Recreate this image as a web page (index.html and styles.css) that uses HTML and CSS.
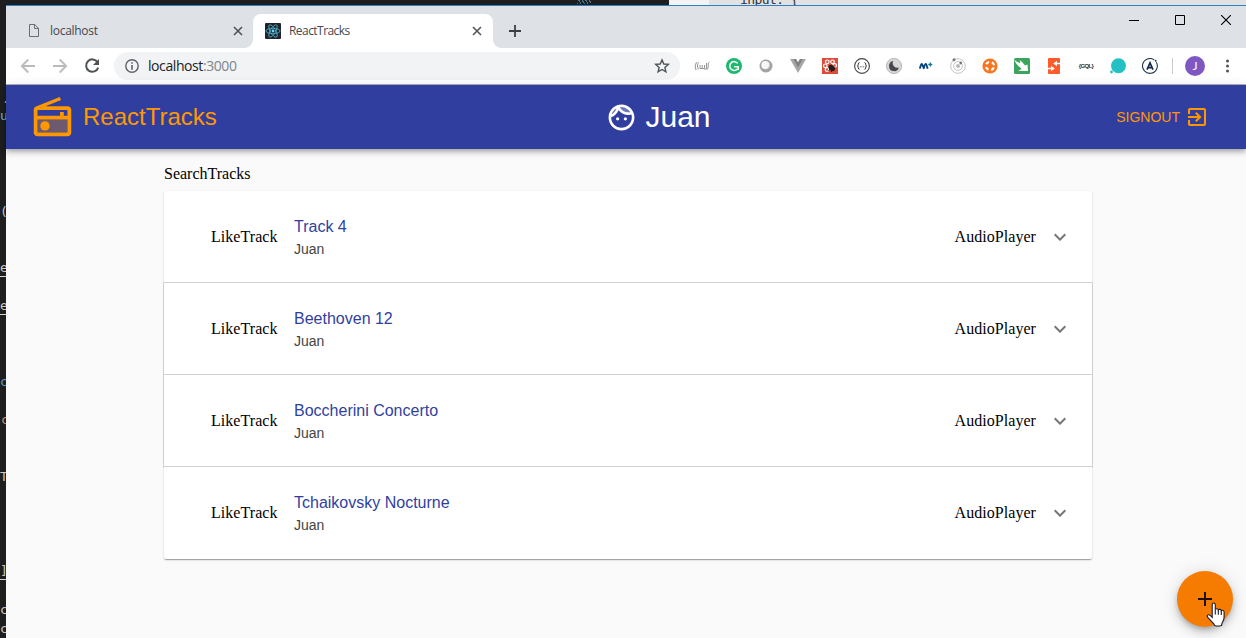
FILE: index.html
```
<!DOCTYPE html>
<html lang="en">
<head>
<meta charset="utf-8">
<title>ReactTracks</title>
<link rel="stylesheet" href="styles.css">
</head>
<body>
<div class="desktop">
  <div class="editor-tab"></div>
  <div class="editor-top"><span>input: {</span></div>
  <div class="gutter">
    <span style="top:90px;left:2px;color:#d4d4d4">.</span>
    <span style="top:107px;color:#6fb3e0">u</span>
    <span style="top:203px;left:0;color:#a9cbe8">(</span>
    <span class="under" style="top:259px">e</span>
    <span class="under" style="top:297px">e</span>
    <span style="top:373px;color:#569cd6">c</span>
    <span style="top:411px;left:1px;color:#ce9178">c</span>
    <span style="top:468px">T</span>
    <span class="under" style="top:562px">]</span>
    <span style="top:601px">c</span>
    <span style="top:620px">c</span>
  </div>

  <main class="window">
    <div class="tabstrip">
      <div class="tab">
        <svg class="doc" width="12" height="16" viewBox="0 0 12 16"><path d="M1.5 1.500h5.300l3.700 3.800v8.200h-9zM6.500 1.500v4h4" fill="none" stroke="#6b6e72"/></svg>
        <span class="tab-title">localhost</span>
        <svg class="close" width="10" height="10" viewBox="0 0 10 10"><path d="M1 1l8 8M9 1L1 9" stroke="#505356" stroke-width="1.6"/></svg>
      </div>
      <div class="tab active">
        <svg class="favicon" width="16" height="16" viewBox="0 0 16 16"><rect width="16" height="16" rx="1" fill="#20232a"/><g fill="none" stroke="#4fb5d0" stroke-width=".8"><ellipse cx="8" cy="8" rx="7" ry="2.7"/><ellipse cx="8" cy="8" rx="7" ry="2.7" transform="rotate(60 8 8)"/><ellipse cx="8" cy="8" rx="7" ry="2.7" transform="rotate(120 8 8)"/></g><circle cx="8" cy="8" r="1.4" fill="#61dafb"/></svg>
        <span class="tab-title react">ReactTracks</span>
        <svg class="close" width="10" height="10" viewBox="0 0 10 10"><path d="M1 1l8 8M9 1L1 9" stroke="#505356" stroke-width="1.6"/></svg>
      </div>
      <svg class="newtab" width="12" height="12" viewBox="0 0 12 12"><path d="M6 0v12M0 6h12" stroke="#3c4043" stroke-width="1.8"/></svg>
      <div class="controls">
        <svg width="10" height="10" viewBox="0 0 10 10"><path d="M0 5.500h10" stroke="#000"/></svg>
        <svg width="10" height="10" viewBox="0 0 10 10"><path d="M.5 .5h9v9h-9z" fill="none" stroke="#000"/></svg>
        <svg width="10" height="10" viewBox="0 0 10 10"><path d="M0 0l10 10M10 0L0 10" stroke="#000" stroke-width="1.1"/></svg>
      </div>
    </div>

    <div class="toolbar">
      <div class="cell"><svg width="16" height="16" viewBox="0 0 16 16"><path d="M15 8H2M8.3 1.5L1.8 8l6.5 6.5" fill="none" stroke="#b9bbbd" stroke-width="1.8"/></svg></div>
      <div class="cell"><svg width="16" height="16" viewBox="0 0 16 16"><path d="M1 8h13M7.7 1.5L14.2 8l-6.5 6.5" fill="none" stroke="#b9bbbd" stroke-width="1.8"/></svg></div>
      <div class="cell"><svg width="16" height="16" viewBox="0 0 16 16"><path d="M13.6 4.3A6.2 6.2 0 1 0 14.2 9.6" fill="none" stroke="#505356" stroke-width="2"/><path d="M15 1v6H9z" fill="#505356"/></svg></div>
      <div class="omnibox">
        <svg width="14" height="14" viewBox="0 0 14 14"><circle cx="7" cy="7" r="6.2" fill="none" stroke="#5f6368" stroke-width="1.4"/><path d="M7 3.200v1.600M7 6v4.800" stroke="#5f6368" stroke-width="1.6"/></svg>
        <span class="url">localhost<i>:3000</i></span>
        <svg class="star" width="16" height="16" viewBox="0 0 16 16"><path d="M8 1.9l1.8 4.1 4.5.4-3.4 3 1 4.4L8 11.5l-3.9 2.3 1-4.4-3.4-3 4.5-.4z" fill="none" stroke="#505356" stroke-width="1.4"/></svg>
      </div>
      <div class="extensions">
        <div class="cell"><svg width="16" height="10" viewBox="0 0 16 10"><path d="M2.500 1Q0 5 2 9M4.300 1.500Q2.500 5 4.300 8.500M6 4v3.500h2.200V4M8.200 7.500h2.300V4M12.500 2v5.500l-2 1M15.500 1Q13.800 1.500 14.200 4.500T12.500 9" fill="none" stroke="#888" stroke-width=".9"/></svg></div>
        <div class="cell"><svg width="16" height="16" viewBox="0 0 16 16"><circle cx="8" cy="8" r="8" fill="#1eb871"/><path d="M11.7 5.4A4.4 4.4 0 1 0 11.4 11M8.2 8.7h4v3.3" fill="none" stroke="#fff" stroke-width="1.5"/></svg></div>
        <div class="cell"><svg width="14" height="14" viewBox="0 0 14 14"><circle cx="7" cy="7" r="6.5" fill="#a3a3a3"/><circle cx="6.4" cy="6.1" r="4.1" fill="#f6f6f6"/><path d="M8 10q2-1 2.5-3" stroke="#ccc" fill="none"/></svg></div>
        <div class="cell"><svg width="16" height="14" viewBox="0 0 16 14"><path d="M0 0h6l2 3.5L10 0h6L8 14z" fill="#a7a7a7"/><path d="M3.2 0H6l2 3.5L10 0h2.800L8 8.400z" fill="#828282"/></svg></div>
        <div class="cell"><svg width="16" height="16" viewBox="0 0 16 16"><path d="M0 0h16v16H0z" fill="#dd4b39"/><g fill="none" stroke="#fff" stroke-width="1.2"><circle cx="5.300" cy="3.800" r="1.800"/><circle cx="10.500" cy="3.800" r="1.800"/><circle cx="3.300" cy="7.800" r="1.800"/><circle cx="12.700" cy="7.500" r="1.800"/><circle cx="5" cy="11.500" r="1.800"/></g><ellipse cx="9.800" cy="10" rx="3.600" ry="2.700" transform="rotate(40 9.800 10)" fill="#241b1b"/><path d="M7 7l1.500 1.500M11 7.500L6.500 13M13 9.500L9 14" stroke="#241b1b"/></svg></div>
        <div class="cell"><svg width="16" height="16" viewBox="0 0 16 16"><circle cx="8" cy="8" r="7.4" fill="none" stroke="#444" stroke-width="1.1"/><path d="M5.500 4.700q-1.300 0-1.200 1.500Q4.400 8 3.400 8q1 0 .9 1.800-.1 1.500 1.200 1.500M10.500 4.700q1.300 0 1.200 1.500Q11.600 8 12.600 8q-1 0-.9 1.800.1 1.500-1.200 1.500" fill="none" stroke="#333"/><path d="M5.900 8.800h.9M7.500 8.800h.9M9.200 8.800h.9" stroke="#555"/></svg></div>
        <div class="cell"><svg width="16" height="16" viewBox="0 0 16 16"><circle cx="8" cy="8" r="7.600" fill="#d7d7d7" stroke="#aaa" stroke-width=".8"/><path d="M7.200 3a5.100 5.100 0 1 0 5.800 6.500A4.700 4.700 0 0 1 7.200 3z" fill="#47484b"/></svg></div>
        <div class="cell"><svg width="14" height="10" viewBox="0 0 14 10"><path d="M.8 7.600Q2 3 2.700 3T4.700 7.200Q6 3 6.800 3T8.600 7.800" fill="none" stroke="#08437c" stroke-width="1.900" stroke-linejoin="round"/><path d="M9.300 3.500h4M11.300 1.500v4" stroke="#08779d" stroke-width="1.300"/></svg></div>
        <div class="cell"><svg width="16" height="16" viewBox="0 0 16 16"><g fill="none" stroke="#c4c4c4"><circle cx="8" cy="8" r="7.300"/><circle cx="8" cy="8" r="4.400"/></g><circle cx="8" cy="8" r="2" fill="#b9b9b9"/><circle cx="4" cy="1.800" r="1.500" fill="#777"/><circle cx="10.800" cy="5" r="1.400" fill="#777"/></svg></div>
        <div class="cell"><svg width="16" height="16" viewBox="0 0 16 16"><circle cx="8" cy="8" r="7.600" fill="#f77620"/><circle cx="8" cy="8" r="4.100" fill="none" stroke="#fff" stroke-width="2.200" stroke-dasharray="3.600 2.840" stroke-dashoffset="-1.420"/><circle cx="8" cy="8" r="1.700" fill="#f77620"/></svg></div>
        <div class="cell"><svg width="16" height="16" viewBox="0 0 16 16"><rect width="16" height="16" rx="1.500" fill="#3ba55d"/><path d="M0 1.500Q4 5 6.500 5L5.500 2Q9 4 11 7.500L13.500 6.500 14 13 4 13Q6.500 12 7.500 10.500 3 8 0 1.500z" fill="#fff"/></svg></div>
        <div class="cell"><svg width="12" height="16" viewBox="0 0 12 16"><rect width="12" height="16" rx="1" fill="#fd5b29"/><path d="M0 10.500h4M12 5.500H8" fill="none" stroke="#fff" stroke-width="1.400"/><path d="M9 2.800L5.200 5.500 9 8.200zM3 7.800l3.800 2.700L3 13.200z" fill="#fff"/></svg></div>
        <div class="cell gql">{GQL}</div>
        <div class="cell"><svg width="16" height="16" viewBox="0 0 16 16"><circle cx="8.500" cy="7.700" r="7.500" fill="#22c1c3"/><circle cx="1.500" cy="14" r="1.400" fill="#22c1c3"/></svg></div>
        <div class="cell"><svg width="16" height="16" viewBox="0 0 16 16"><path d="M14.300 4.200A7.400 7.400 0 1 1 12.200 1.900" fill="none" stroke="#24394f" stroke-width="1.100"/><circle cx="13.600" cy="2.700" r="1" fill="#24394f"/><path d="M5 11.700L8 4.800l3 6.900M6.500 9.700h3" fill="none" stroke="#172c4b" stroke-width="1.700"/></svg></div>
      </div>
      <div class="divider"></div>
      <div class="avatar">J</div>
      <svg class="dots" width="4" height="14" viewBox="0 0 4 14"><g fill="#505356"><circle cx="2.500" cy="2" r="1.500"/><circle cx="2.500" cy="7" r="1.500"/><circle cx="2.500" cy="12" r="1.500"/></g></svg>
    </div>

    <header class="appbar">
      <div class="brand">
        <svg width="45" height="45" viewBox="0 0 24 24" fill="currentColor"><path opacity=".3" d="M4 20h16v-7H4z"/><path d="M20 6H8.300l8.260-3.340L15.880 1 3.240 6.150C2.510 6.430 2 7.170 2 8v12c0 1.100.89 2 2 2h16c1.110 0 2-.9 2-2V8c0-1.110-.89-2-2-2zm0 2v3h-2V9h-2v2H4V8h16zM4 20v-7h16v7H4z"/><circle cx="8" cy="16.480" r="2.500"/></svg>
        <span>ReactTracks</span>
      </div>
      <div class="user">
        <svg width="31" height="31" viewBox="0 0 24 24" fill="currentColor"><path opacity=".3" d="M17.5 8c.46 0 .91-.05 1.34-.12C17.44 5.56 14.9 4 12 4c-.46 0-.91.05-1.34.12C12.06 6.44 14.6 8 17.5 8zM8.08 5.03C6.37 6 5.05 7.58 4.42 9.47c1.71-.97 3.03-2.55 3.66-4.44z"/><path d="M12 2C6.48 2 2 6.48 2 12s4.48 10 10 10 10-4.48 10-10S17.52 2 12 2zm0 2c2.9 0 5.44 1.56 6.84 3.88-.43.07-.88.12-1.34.12-2.9 0-5.44-1.56-6.84-3.88.43-.07.88-.12 1.34-.12zM8.08 5.03C7.45 6.92 6.13 8.5 4.42 9.47 5.05 7.58 6.37 6 8.08 5.03zM12 20c-4.41 0-8-3.59-8-8 0-.05.01-.1.01-.15 2.6-.98 4.68-2.99 5.74-5.55 1.83 2.26 4.62 3.7 7.75 3.7.75 0 1.47-.09 2.17-.24.21.71.33 1.46.33 2.24 0 4.41-3.59 8-8 8z"/><circle cx="9" cy="13" r="1.25"/><circle cx="15" cy="13" r="1.25"/></svg>
        <span>Juan</span>
      </div>
      <div class="signout">
        <span>SIGNOUT</span>
        <svg width="24" height="24" viewBox="0 0 24 24" fill="currentColor"><path d="M10.09 15.59L11.5 17l5-5-5-5-1.41 1.41L12.67 11H3v2h9.67l-2.58 2.59zM19 3H5c-1.11 0-2 .9-2 2v4h2V5h14v14H5v-4H3v4c0 1.1.89 2 2 2h14c1.1 0 2-.9 2-2V5c0-1.1-.9-2-2-2z"/></svg>
      </div>
    </header>

    <section class="content">
      <div class="search">SearchTracks</div>
      <div class="panels">
        <div class="panel">
          <span class="like">LikeTrack</span>
          <div class="info"><div class="title">Track 4</div><div class="by">Juan</div></div>
          <span class="audio">AudioPlayer</span>
          <svg width="24" height="24" viewBox="0 0 24 24"><path d="M16.59 8.59L12 13.17 7.41 8.59 6 10l6 6 6-6z" fill="#757575"/></svg>
        </div>
        <div class="panel mid">
          <span class="like">LikeTrack</span>
          <div class="info"><div class="title">Beethoven 12</div><div class="by">Juan</div></div>
          <span class="audio">AudioPlayer</span>
          <svg width="24" height="24" viewBox="0 0 24 24"><path d="M16.59 8.59L12 13.17 7.41 8.59 6 10l6 6 6-6z" fill="#757575"/></svg>
        </div>
        <div class="panel mid">
          <span class="like">LikeTrack</span>
          <div class="info"><div class="title">Boccherini Concerto</div><div class="by">Juan</div></div>
          <span class="audio">AudioPlayer</span>
          <svg width="24" height="24" viewBox="0 0 24 24"><path d="M16.59 8.59L12 13.17 7.41 8.59 6 10l6 6 6-6z" fill="#757575"/></svg>
        </div>
        <div class="panel">
          <span class="like">LikeTrack</span>
          <div class="info"><div class="title">Tchaikovsky Nocturne</div><div class="by">Juan</div></div>
          <span class="audio">AudioPlayer</span>
          <svg width="24" height="24" viewBox="0 0 24 24"><path d="M16.59 8.59L12 13.17 7.41 8.59 6 10l6 6 6-6z" fill="#757575"/></svg>
        </div>
      </div>
    </section>
  </main>

  <div class="fab"><svg width="24" height="24" viewBox="0 0 24 24"><path d="M19 13h-6v6h-2v-6H5v-2h6V5h2v6h6v2z" fill="#1f0f00"/></svg></div>
  <svg class="cursor" width="19" height="25" viewBox="0 0 19 25"><path d="M6.2 15.5V2.6Q6.2 1 7.7 1t1.6 1.6v5q.5-1 1.6-.9 1.3 0 1.5 1.4.4-.8 1.5-.7 1.3.1 1.4 1.5.4-.7 1.300-.6 1.500.1 1.500 1.700v5q0 3-1.300 4.700l-.8 1.600-.5 2.200Q11.500 24.600 8.600 23.500L7.600 21.500 2 15.600Q.6 13.800 1.700 13.100q1.300-.8 2.700.6z" fill="#fff" stroke="#1b1b2b" stroke-width="1.1"/><path d="M9.300 7.500v5M12.300 8.200v4.500M15.300 9.200v3.700" stroke="#1b1b2b" stroke-width="1.1"/></svg>
</div>
</body>
</html>
```
FILE: styles.css
```
* { box-sizing: border-box; }
body { margin: 0; background: #1e1e1e; overflow: hidden; font-family: "Liberation Serif", "Times New Roman", serif; font-size: 16px; color: #000; }
svg { display: block; flex: none; }
.desktop { position: relative; width: 1246px; height: 638px; padding: 5px 0 0 6px; overflow: hidden; background: #1e1e1e; }

/* Editor windows peeking out behind the browser */
.editor-tab { position: absolute; left: 577px; top: 0; width: 14px; height: 4px; background: repeating-linear-gradient(60deg, #4c7188 0 1px, #1e1e1e 1px 3px); }
.editor-top { position: absolute; left: 669px; top: 0; width: 577px; height: 5px; overflow: hidden; background: linear-gradient(90deg, #f3f3f3 0 40px, #e2e2e2 40px); font: 13px/14px "DejaVu Sans Mono", monospace; color: #333; }
.editor-top span { position: absolute; left: 71px; top: -7px; letter-spacing: -.6px; }
.gutter { position: absolute; left: 0; top: 0; width: 6px; height: 638px; overflow: hidden; font: 13px/17px "DejaVu Sans Mono", monospace; color: #c8c8c8; }
.gutter span { position: absolute; left: 0; }
.gutter .under { border-bottom: 1px solid #d4d4d4; }

.window { position: relative; height: 633px; display: flex; flex-direction: column; background: #fafafa; border-top: 1px solid #2a82cc; }

/* Tab strip */
.tabstrip { height: 42px; display: flex; align-items: flex-end; background: #dee1e6; font-family: "Open Sans", "Noto Sans", sans-serif; font-size: 12px; color: #45494d; }
.tab { position: relative; display: flex; align-items: center; width: 247px; height: 34px; padding: 0 10px 0 22px; }
.tab-title { margin-left: 10px; padding-bottom: 2px; letter-spacing: -.28px; }
.tab .close { margin-left: auto; }
.active { width: 240px; padding: 0 11px 0 12px; background: #fff; border-radius: 8px 8px 0 0; }
.active::before, .active::after { content: ""; position: absolute; bottom: 0; width: 8px; height: 8px; }
.active::before { left: -8px; background: radial-gradient(circle at 0 0, transparent 7.5px, #fff 8px); }
.active::after { right: -8px; background: radial-gradient(circle at 100% 0, transparent 7.5px, #fff 8px); }
.react { margin-left: 8px; letter-spacing: -.55px; }
.newtab { margin: 0 0 11px 16px; }
.controls { display: flex; gap: 36px; margin: 0 15px 23px auto; }

/* Toolbar */
.toolbar { height: 37px; flex: none; display: flex; align-items: center; padding: 0 0 0 6px; background: #fff; border-bottom: 1px solid #b4b5b8; font-family: "Open Sans", "Noto Sans", sans-serif; }
.cell { width: 32px; display: flex; justify-content: center; align-items: center; }
.omnibox { display: flex; align-items: center; width: 566px; height: 28px; margin-left: 6px; padding: 0 10px 0 11px; border-radius: 14px; background: #f1f3f4; }
.url { margin-left: 9px; padding-bottom: 1px; font-size: 14px; letter-spacing: -.42px; color: #202124; }
.url i { font-style: normal; color: #80868b; }
.star { margin-left: auto; }
.extensions { display: flex; margin-left: 6px; }
.gql { font: bold 6px "Liberation Sans", sans-serif; letter-spacing: -.6px; color: #333; }
.divider { width: 1px; height: 16px; margin-left: 6px; background: #c9cbce; }
.avatar { width: 20px; height: 20px; margin-left: 12px; border-radius: 50%; background: #7e57c2; color: #fff; font: 12px/20px Lato, sans-serif; text-align: center; }
.dots { margin-left: 20px; }

/* App bar */
.appbar { position: relative; height: 64px; flex: none; display: grid; grid-template-columns: 1fr auto 1fr; align-items: center; padding: 0 37px 0 24px; background: #303f9f; color: #ff9800; font-family: "Liberation Sans", Arial, sans-serif; box-shadow: 0 2px 4px -1px rgba(0,0,0,.2), 0 4px 5px rgba(0,0,0,.14), 0 1px 10px rgba(0,0,0,.12); }
.brand { display: flex; align-items: center; gap: 8px; font-size: 24px; }
.user { display: flex; align-items: center; gap: 8px; margin-left: 78px; color: #fff; font-size: 30px; }
.signout { display: flex; align-items: center; justify-content: flex-end; gap: 5px; font-size: 14px; }

/* Track list */
.content { width: 928px; margin-left: 158px; padding-top: 16px; }
.search { height: 26px; line-height: 18px; }
.panel { position: relative; display: flex; align-items: center; height: 92px; padding: 0 20px 0 47px; background: #fff; box-shadow: 0 2px 1px -1px rgba(0,0,0,.2), 0 1px 1px rgba(0,0,0,.14), 0 1px 3px rgba(0,0,0,.12); }
.panel:first-child { border-radius: 2px 2px 0 0; }
.panel:last-child { border-radius: 0 0 2px 2px; }
.panel + .panel::before { content: ""; position: absolute; left: 0; right: 0; top: -1px; height: 1px; background: #d2d2d2; }
.mid { box-shadow: 0 0 0 1px #d0d0d0; }
.like { letter-spacing: .05px; }
.info { margin-left: 16.5px; font-family: "Liberation Sans", Arial, sans-serif; }
.title { font-size: 16px; line-height: 24px; color: #303f9f; }
.by { font-size: 14px; line-height: 20px; color: #444; }
.audio { margin-left: auto; margin-right: 12px; letter-spacing: .05px; }

/* Floating button and pointer */
.fab { position: absolute; left: 1177px; top: 571px; width: 56px; height: 56px; display: grid; place-items: center; border-radius: 50%; background: #f57c00; box-shadow: 0 3px 5px -1px rgba(0,0,0,.2), 0 6px 10px rgba(0,0,0,.14), 0 1px 18px rgba(0,0,0,.12); }
.cursor { position: absolute; left: 1206px; top: 602px; }
```
